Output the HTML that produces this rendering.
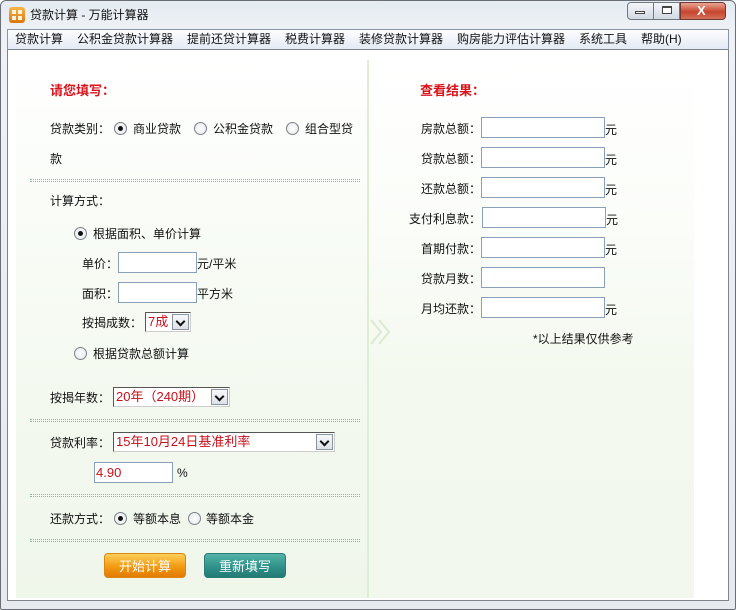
<!DOCTYPE html>
<html><head><meta charset="utf-8">
<style>
*{margin:0;padding:0;box-sizing:border-box}
body{width:736px;height:610px;overflow:hidden;background:#fff;font-family:"Liberation Sans","Noto Sans CJK SC",sans-serif;font-size:12px;color:#111;position:relative}
.a{position:absolute;white-space:nowrap;line-height:14px}
.frame{position:absolute;left:0;top:0;width:736px;height:610px;border:1px solid #6b6f75;border-radius:6px 6px 2px 2px;background:linear-gradient(#e4ebf2,#eef2f6 30px,#e6eaee)}
.menu{position:absolute;left:7px;top:29px;width:722px;height:20px;background:linear-gradient(#fdfeff,#e4ebf5);border:1px solid #8b96a5;border-bottom:none}
.content{position:absolute;left:7px;top:49px;width:722px;height:552px;background:#fff;border:1px solid #7e848c}
.lp{position:absolute;left:16px;top:60px;width:351px;height:538px;background:linear-gradient(#fff,#f7fbf4 40%,#eff6ea)}
.rp{position:absolute;left:367px;top:60px;width:327px;height:538px;background:linear-gradient(#fff 0,#fbfdf9 30%,#f3f9ef 60%,#f2f8ee);border-left:2px solid #dfeed3}
.red{color:#d9131c;font-weight:bold;font-size:13px}
.dot{position:absolute;left:30px;width:330px;height:3px;border-top:1px dotted #8fb3aa;border-bottom:1px dotted #8fb3aa}
.radio{position:absolute;width:13px;height:13px;border-radius:50%;border:1px solid #7c8288;background:radial-gradient(#fff,#e4e6e8)}
.radio.on::after{content:"";position:absolute;left:3px;top:3px;width:5px;height:5px;border-radius:50%;background:#111}
.in{position:absolute;height:21px;border:1px solid #8aa0b8;background:#fff}
.sel{position:absolute;height:20px;border:1px solid #555;border-right-color:#ccc;border-bottom-color:#ccc;background:#fff;color:#c8101a;line-height:17px;padding-left:2px;font-size:13px}
.sel b{position:absolute;right:1px;top:1px;width:17px;height:16px;border:1px solid #8a949e;background:linear-gradient(#f7f8fa,#dde2e8);font-weight:normal}
.sel b::after{content:"";position:absolute;left:4px;top:3px;width:5px;height:5px;border-right:2px solid #111;border-bottom:2px solid #111;transform:rotate(45deg)}
.btn{position:absolute;width:82px;height:25px;border-radius:4px;color:#fff;text-align:center;line-height:25px;font-size:13px}
</style></head><body>
<div class="frame"></div>
<div class="a" style="left:9px;top:7px;width:16px;height:16px;border-radius:3px;background:linear-gradient(#f7b54a,#d9770e)"></div>
<div class="a" style="left:12px;top:10px;width:4px;height:4px;background:#fff4d8"></div><div class="a" style="left:18px;top:10px;width:4px;height:4px;background:#fff4d8"></div>
<div class="a" style="left:12px;top:16px;width:4px;height:4px;background:#fff4d8"></div><div class="a" style="left:18px;top:16px;width:4px;height:4px;background:#fff4d8"></div>
<div class="a" style="left:30px;top:8px;font-size:12px">贷款计算 - 万能计算器</div>
<div class="a" style="left:627px;top:2px;width:27px;height:18px;border:1px solid #6f7780;border-radius:4px 0 0 4px;background:linear-gradient(#f4f6f9,#d2d9e2)"></div>
<div class="a" style="left:635px;top:11px;width:10px;height:3px;border:1px solid #444;background:#fff"></div>
<div class="a" style="left:654px;top:2px;width:26px;height:18px;border:1px solid #6f7780;border-left:none;background:linear-gradient(#f4f6f9,#d2d9e2)"></div>
<div class="a" style="left:662px;top:6px;width:10px;height:8px;border:1px solid #444;border-top-width:2px;background:#fff"></div>
<div class="a" style="left:680px;top:2px;width:46px;height:18px;border:1px solid #6f3a32;border-radius:0 4px 4px 0;background:linear-gradient(#e9a593,#c8452e 55%,#d4705a)"></div>
<div class="a" style="left:697px;top:4px;color:#fff;font-weight:bold;font-size:13px">X</div>
<div class="menu"></div>
<div class="a" style="left:15px;top:32px">贷款计算</div>
<div class="a" style="left:77px;top:32px">公积金贷款计算器</div>
<div class="a" style="left:187px;top:32px">提前还贷计算器</div>
<div class="a" style="left:285px;top:32px">税费计算器</div>
<div class="a" style="left:359px;top:32px">装修贷款计算器</div>
<div class="a" style="left:457px;top:32px">购房能力评估计算器</div>
<div class="a" style="left:579px;top:32px">系统工具</div>
<div class="a" style="left:641px;top:32px">帮助(H)</div>
<div class="content"></div>
<div class="lp"></div>
<div class="rp"></div>
<svg class="a" style="left:368px;top:318px" width="30" height="30"><path d="M3 2 L13 14 L3 26 M11 2 L21 14 L11 26" fill="none" stroke="#dbead0" stroke-width="2"/></svg>

<div class="a red" style="left:50px;top:84px">请您填写：</div>
<div class="a" style="left:50px;top:122px">贷款类别：</div>
<div class="radio on" style="left:114px;top:122px"></div><div class="a" style="left:133px;top:122px">商业贷款</div>
<div class="radio" style="left:194px;top:122px"></div><div class="a" style="left:213px;top:122px">公积金贷款</div>
<div class="radio" style="left:286px;top:122px"></div><div class="a" style="left:305px;top:122px">组合型贷</div>
<div class="a" style="left:50px;top:152px">款</div>
<div class="dot" style="top:179px"></div>
<div class="a" style="left:50px;top:194px">计算方式：</div>
<div class="radio on" style="left:74px;top:227px"></div><div class="a" style="left:93px;top:227px">根据面积、单价计算</div>
<div class="a" style="left:82px;top:257px">单价：</div><div class="in" style="left:118px;top:252px;width:79px"></div><div class="a" style="left:197px;top:257px">元/平米</div>
<div class="a" style="left:82px;top:287px">面积：</div><div class="in" style="left:118px;top:282px;width:79px"></div><div class="a" style="left:197px;top:287px">平方米</div>
<div class="a" style="left:82px;top:316px">按揭成数：</div><div class="sel" style="left:145px;top:312px;width:46px">7成<b></b></div>
<div class="radio" style="left:74px;top:347px"></div><div class="a" style="left:93px;top:347px">根据贷款总额计算</div>
<div class="a" style="left:50px;top:391px">按揭年数：</div><div class="sel" style="left:113px;top:387px;width:117px">20年（240期）<b></b></div>
<div class="dot" style="top:419px"></div>
<div class="a" style="left:50px;top:436px">贷款利率：</div><div class="sel" style="left:113px;top:432px;width:222px">15年10月24日基准利率<b></b></div>
<div class="in" style="left:94px;top:462px;width:79px;color:#c8101a;line-height:19px;padding-left:1px;font-size:13px">4.90</div><div class="a" style="left:177px;top:466px">%</div>
<div class="dot" style="top:494px"></div>
<div class="a" style="left:50px;top:512px">还款方式：</div>
<div class="radio on" style="left:114px;top:512px"></div><div class="a" style="left:133px;top:512px">等额本息</div>
<div class="radio" style="left:188px;top:512px"></div><div class="a" style="left:206px;top:512px">等额本金</div>
<div class="dot" style="top:539px"></div>
<div class="btn" style="left:104px;top:553px;background:linear-gradient(#fdcf5a,#f39a12 55%,#e27a05);border:1px solid #d9880e">开始计算</div>
<div class="btn" style="left:204px;top:553px;background:linear-gradient(#55b3a8,#2f928a 55%,#237a75);border:1px solid #2a7c76">重新填写</div>

<div class="a red" style="left:420px;top:84px">查看结果：</div>
<div class="a" style="left:421px;top:122px">房款总额：</div><div class="in" style="left:481px;top:117px;width:124px"></div><div class="a" style="left:605px;top:123px">元</div>
<div class="a" style="left:421px;top:152px">贷款总额：</div><div class="in" style="left:481px;top:147px;width:124px"></div><div class="a" style="left:605px;top:153px">元</div>
<div class="a" style="left:421px;top:182px">还款总额：</div><div class="in" style="left:481px;top:177px;width:124px"></div><div class="a" style="left:605px;top:183px">元</div>
<div class="a" style="left:409px;top:212px">支付利息款：</div><div class="in" style="left:482px;top:207px;width:124px"></div><div class="a" style="left:606px;top:213px">元</div>
<div class="a" style="left:421px;top:242px">首期付款：</div><div class="in" style="left:481px;top:237px;width:124px"></div><div class="a" style="left:605px;top:243px">元</div>
<div class="a" style="left:421px;top:272px">贷款月数：</div><div class="in" style="left:481px;top:267px;width:124px"></div>
<div class="a" style="left:421px;top:302px">月均还款：</div><div class="in" style="left:481px;top:297px;width:124px"></div><div class="a" style="left:605px;top:303px">元</div>
<div class="a" style="left:533px;top:332px">*以上结果仅供参考</div>
</body></html>
